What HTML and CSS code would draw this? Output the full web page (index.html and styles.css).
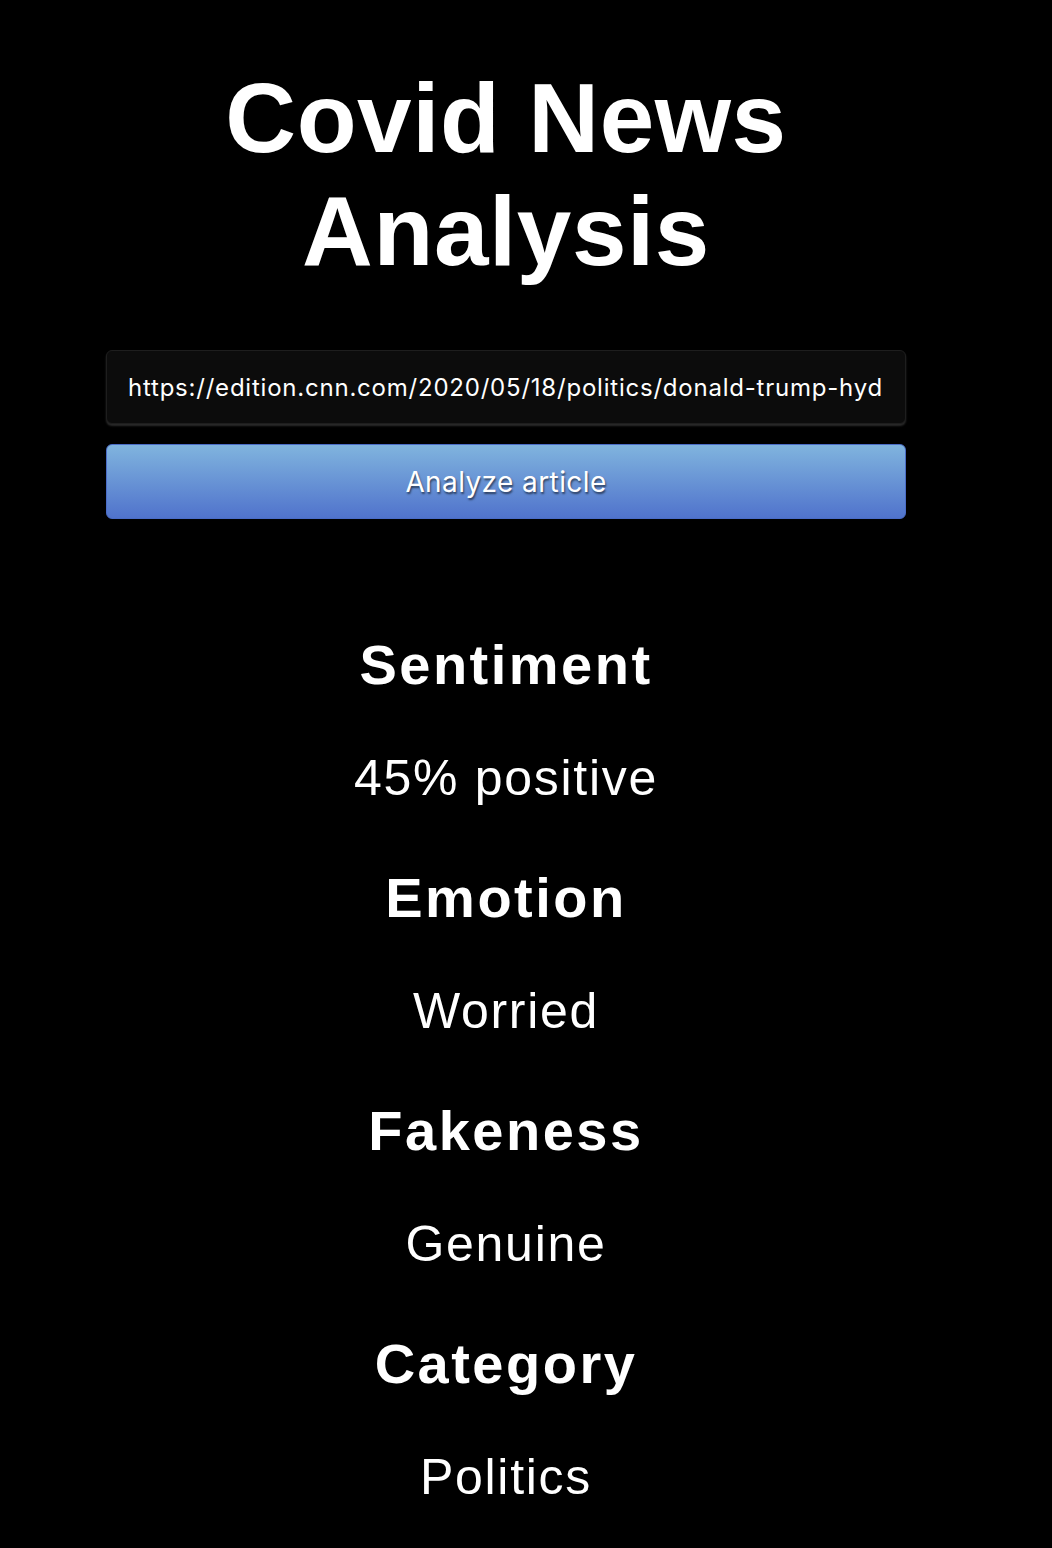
FILE: index.html
```html
<!DOCTYPE html>
<html lang="en">
<head>
<meta charset="utf-8">
<title>Covid News Analysis</title>
<link rel="stylesheet" href="styles.css">
</head>
<body>
<main class="app">
  <h1 class="title">Covid News<br>Analysis</h1>
  <form class="form">
    <input class="url-input" type="text" value="https://edition.cnn.com/2020/05/18/politics/donald-trump-hydroxychloroquine/index.html">
    <button class="analyze-btn" type="button">Analyze article</button>
  </form>
  <section class="results">
    <h2 class="label">Sentiment</h2>
    <p class="value">45% positive</p>
    <h2 class="label">Emotion</h2>
    <p class="value">Worried</p>
    <h2 class="label">Fakeness</h2>
    <p class="value">Genuine</p>
    <h2 class="label">Category</h2>
    <p class="value">Politics</p>
  </section>
</main>
</body>
</html>
```
FILE: styles.css
```css
html, body {
  background: #000;
}
body {
  margin: 8px;
  color: #fff;
  font-family: "Liberation Sans", Arial, sans-serif;
}
.app {
  width: 800px;
  margin-left: 98px;
  display: flex;
  flex-direction: column;
}
.title {
  margin: 54px 0 0;
  font-size: 98px;
  line-height: 113px;
  font-weight: 700;
  text-align: center;
  letter-spacing: 0.6px;
}
.form {
  margin-top: 62px;
  display: flex;
  flex-direction: column;
  gap: 20px;
}
.url-input {
  box-sizing: border-box;
  width: 800px;
  height: 74px;
  padding: 0 21px;
  background: #0c0c0c;
  border: 1px solid #1e1e1e;
  border-radius: 6px;
  box-shadow: 0 2px 2px rgba(70, 70, 70, 0.6);
  color: #fff;
  font-family: Inter, "Liberation Sans", sans-serif;
  font-size: 24px;
  letter-spacing: 0.78px;
  outline: none;
}
.analyze-btn {
  box-sizing: border-box;
  width: 800px;
  height: 75px;
  border: 1px solid #4a6cc6;
  border-radius: 6px;
  background: linear-gradient(to bottom, #80b4de, #5073cc);
  color: #fff;
  font-family: Inter, "Liberation Sans", sans-serif;
  font-size: 28px;
  letter-spacing: 0.4px;
  text-shadow: 1px 2px 2px rgba(0, 0, 0, 0.55);
  cursor: pointer;
}
.results {
  margin-top: 114px;
  display: flex;
  flex-direction: column;
  align-items: center;
}
.label {
  margin: 0 0 51px;
  font-size: 56px;
  line-height: 64px;
  font-weight: 700;
  letter-spacing: 2.5px;
}
.value {
  margin: 0 0 58px;
  font-size: 50px;
  line-height: 60px;
  letter-spacing: 1.7px;
}
```
